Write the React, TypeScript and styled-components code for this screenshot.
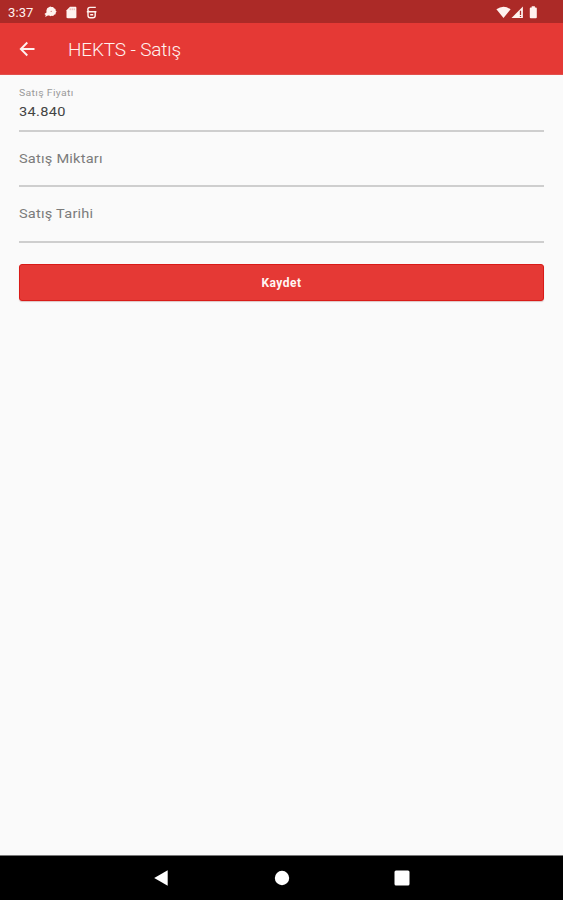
import React from "react";
import styled, { createGlobalStyle } from "styled-components";

const GlobalStyle = createGlobalStyle`
  * { box-sizing: border-box; }
  body { margin: 0; background: #fafafa; font-family: Roboto, "Liberation Sans", sans-serif; }
`;

const Screen = styled.div`
  display: flex;
  flex-direction: column;
  width: 100%;
  height: 100vh;
  overflow: hidden;
  background: #fafafa;
`;

const StatusBar = styled.header`
  display: flex;
  align-items: center;
  justify-content: space-between;
  flex: none;
  height: 23px;
  padding: 1px 25px 0 8px;
  background: #ac2a27;
  color: #fff2ef;
`;

const Clock = styled.span`
  width: 36px;
  padding-top: 1px;
  font-size: 13px;
  line-height: 22px;
  letter-spacing: 0.1px;
`;

const StatusGroup = styled.div`
  display: flex;
  align-items: center;
`;

const StatusIcon = styled.svg<{ $gap?: number }>`
  display: block;
  flex: none;
  margin-left: ${(p) => p.$gap ?? 0}px;
`;

const AppBar = styled.div`
  display: flex;
  align-items: center;
  flex: none;
  height: 52px;
  padding: 1px 19px 0;
  background: #e53935;
  border-bottom: 1px solid #e2504c;
  color: #fff2f0;
`;

const BackButton = styled.button`
  display: flex;
  width: 49px;
  padding: 0;
  border: 0;
  background: none;
  color: inherit;
`;

const Title = styled.h1`
  margin: 0;
  padding-top: 2px;
  font-size: 19px;
  font-weight: 300;
  line-height: 24px;
  letter-spacing: -0.15px;
`;

const Form = styled.form`
  display: flex;
  flex-direction: column;
  flex: 1;
  padding: 0 19px;
`;

const Field = styled.label<{ $height: number }>`
  display: flex;
  flex-direction: column;
  align-items: flex-start;
  justify-content: flex-end;
  height: ${(p) => p.$height}px;
  border-bottom: 2px solid #cecece;
`;

const FloatingLabel = styled.span`
  margin-bottom: 1px;
  font-size: 9.5px;
  line-height: 14px;
  letter-spacing: 0.3px;
  color: #9a9a9a;
  transform: scaleX(1.1);
  transform-origin: left center;
`;

const FieldText = styled.span<{ $filled?: boolean; $space: number }>`
  margin-bottom: ${(p) => p.$space}px;
  font-size: 13.5px;
  line-height: 20px;
  letter-spacing: ${(p) => (p.$filled ? 0.3 : 0.2)}px;
  color: ${(p) => (p.$filled ? "#444444" : "#7c7c7c")};
  transform: scaleX(1.08);
  transform-origin: left center;
`;

const SaveButton = styled.button`
  height: 37px;
  margin-top: 21px;
  padding: 0;
  border: 1px solid #d91b18;
  border-radius: 3px;
  background: #e53935;
  box-shadow: 0 1px 1px rgba(120, 0, 0, 0.22);
  color: #fff5f3;
  font: 700 12px/18px Roboto, "Liberation Sans", sans-serif;
  letter-spacing: 0.5px;
`;

const NavigationBar = styled.nav`
  display: flex;
  align-items: center;
  justify-content: center;
  gap: 104px;
  flex: none;
  height: 45px;
  border-top: 1px solid #777777;
  background: #000000;
`;

const NavIcon = styled.svg`
  display: block;
`;

export default function App() {
  return (
    <Screen>
      <GlobalStyle />
      <StatusBar>
        <StatusGroup>
          <Clock>3:37</Clock>
          <StatusIcon width="13" height="12" viewBox="0 0 13 12">
            <path d="M3.2 2.2 4.9 1.3 6.2.5l1.4.6 1.5-.2.9 1.4 1.5.7.1 1.4 1 1.2-.9 1.2-.1 1.5-1.5.5-.9 1.2-1.5-.3-1.3.6-1.2-.8-1.3.1L1.2 11l.5-2.1L.4 8l2.1-1.5-.1-1.9z" fill="currentColor" />
            <circle cx="7.2" cy="5.4" r=".6" fill="#d37775" />
          </StatusIcon>
          <StatusIcon $gap={9} width="11" height="13" viewBox="0 0 11 13">
            <path d="M4 .8h5.2c.8 0 1.2.4 1.2 1.2v9c0 .8-.4 1.2-1.2 1.2H1.7C.9 12.2.5 11.8.5 11V4.3z" fill="currentColor" />
            <path d="M4.2 2.4v1.8M6.2 2.4v1.8M8.2 2.4v1.8" stroke="#dc9a98" strokeWidth=".8" />
          </StatusIcon>
          <StatusIcon $gap={9} width="11" height="13" viewBox="0 0 11 13">
            <path d="M9.8 1.4H4Q1.8 1.4 1.8 3.6T4 5.8h5.2M.8 5.8h9.6M2 5.8v3.6q0 2.3 2.3 2.3h2.6q2.3 0 2.3-2.3V5.8M4.2 8.8h3" fill="none" stroke="currentColor" strokeWidth="1.4" />
          </StatusIcon>
        </StatusGroup>
        <StatusGroup>
          <StatusIcon width="15" height="13" viewBox="0 0 15 13">
            <path d="M.4 3.3Q7.5-1.8 14.6 3.3L7.5 12z" fill="currentColor" />
          </StatusIcon>
          <StatusIcon width="13" height="13" viewBox="0 0 13 13">
            <path d="M.5 12 11.9.6V12z" fill="currentColor" />
            <path d="M9.5 4.8v4.3M9.5 10v1.1" stroke="#ac2a27" strokeWidth="1.3" />
          </StatusIcon>
          <StatusIcon $gap={5} width="9" height="13" viewBox="0 0 9 13">
            <path d="M2.7.3h3.2v1.2h1q.9 0 .9 1v8.8q0 .9-.9.9H1.7q-.9 0-.9-.9V2.5q0-1 .9-1h1z" fill="currentColor" />
          </StatusIcon>
        </StatusGroup>
      </StatusBar>

      <AppBar>
        <BackButton aria-label="Geri">
          <StatusIcon width="16" height="16" viewBox="0 0 16 16">
            <path d="M15.5 8H1.8M8.3 1.5 1.8 8l6.5 6.5" fill="none" stroke="currentColor" strokeWidth="1.9" />
          </StatusIcon>
        </BackButton>
        <Title>HEKTS - Satış</Title>
      </AppBar>

      <Form onSubmit={(e) => e.preventDefault()}>
        <Field $height={57}>
          <FloatingLabel>Satış Fiyatı</FloatingLabel>
          <FieldText $filled $space={9}>34.840</FieldText>
        </Field>
        <Field $height={55}>
          <FieldText $space={17}>Satış Miktarı</FieldText>
        </Field>
        <Field $height={56}>
          <FieldText $space={18}>Satış Tarihi</FieldText>
        </Field>
        <SaveButton>Kaydet</SaveButton>
      </Form>

      <NavigationBar>
        <NavIcon width="16" height="18" viewBox="0 0 16 18">
          <path d="M.2 9 13.7 1.2v15.6z" fill="#fff" />
        </NavIcon>
        <NavIcon width="16" height="18" viewBox="0 0 16 18">
          <circle cx="8" cy="9" r="7.2" fill="#fff" />
        </NavIcon>
        <NavIcon width="16" height="18" viewBox="0 0 16 18">
          <rect x=".5" y="1.5" width="15" height="15" rx="1.5" fill="#fff" />
        </NavIcon>
      </NavigationBar>
    </Screen>
  );
}
